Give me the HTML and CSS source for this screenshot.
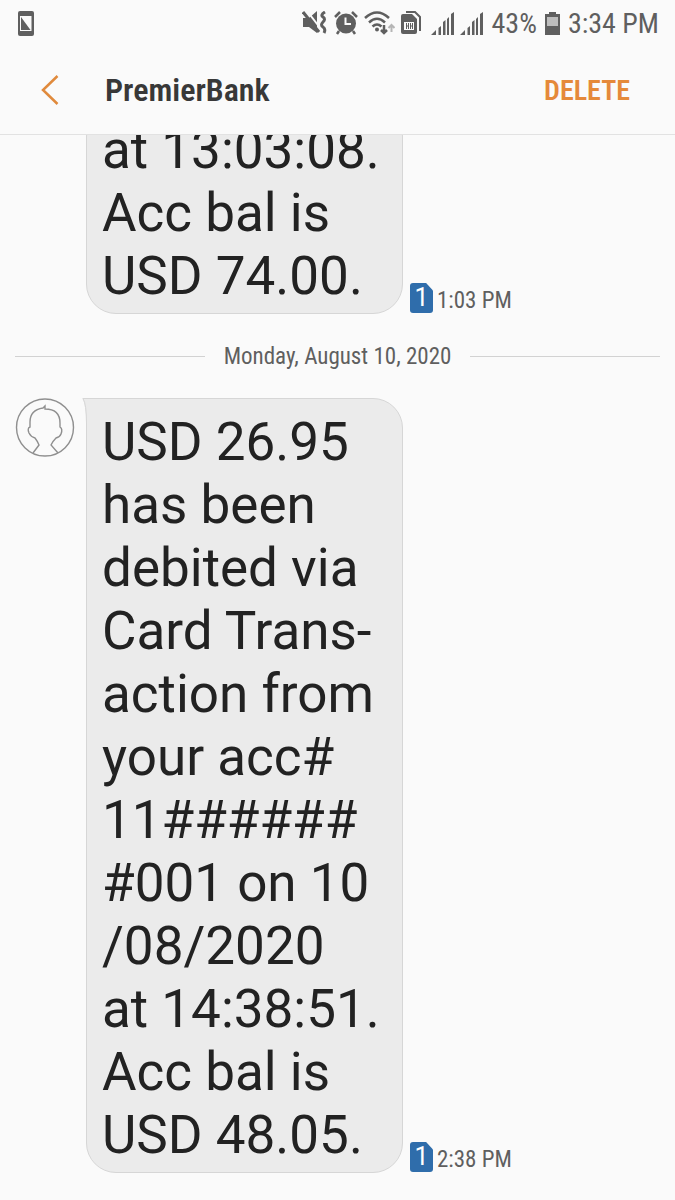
FILE: index.html
```
<!DOCTYPE html>
<html lang="en">
<head>
    <meta charset="utf-8">
    <meta name="viewport" content="width=device-width, initial-scale=1">
    <title>PremierBank</title>
    <link rel="stylesheet" href="styles.css">
</head>
<body>
  <div class="status-bar">
    <svg class="app-icon" width="16" height="25" viewBox="0 0 16 25">
      <rect x="0" y="0" width="16" height="25" rx="2" fill="#5f5f5f"/>
      <path d="M2 5H13.500V20H2Z" fill="#fafafa"/>
      <path d="M3 6L12.500 19H3Z" fill="#5f5f5f"/>
    </svg>
    <div class="status-icons">
      <!-- sound off, vibrate -->
      <svg width="26" height="24" viewBox="0 0 26 24">
        <path d="M1 7H7L15 0V22L7 16H1Z" fill="#5f5f5f"/>
        <path d="M5 0L19 18" stroke="#fafafa" stroke-width="2"/>
        <path d="M1 1L17 21" stroke="#5f5f5f" stroke-width="3"/>
        <path d="M23 1Q18 4 21 6T21 11T21 16T22 22" fill="none" stroke="#5f5f5f" stroke-width="3"/>
      </svg>
      <!-- alarm -->
      <svg width="24" height="24" viewBox="0 0 24 24">
        <circle cx="12" cy="12.500" r="10" fill="#5f5f5f"/>
        <path d="M11.500 6.500V13H17" fill="none" stroke="#fafafa" stroke-width="2"/>
        <path d="M1 6L6 1M18 1L23 6M5 20L3 23M19 20L21 23" stroke="#5f5f5f" stroke-width="2.500"/>
      </svg>
      <!-- wifi -->
      <svg width="31" height="24" viewBox="0 0 31 24">
        <path d="M1 7Q13 -4 25 7M5 11.500Q13 4 21 11.500M8.500 15.500Q13 11.500 17.500 15.500" fill="none" stroke="#5f5f5f" stroke-width="2.500"/>
        <circle cx="13" cy="18.500" r="2" fill="#5f5f5f"/>
        <path d="M20 14V22M17 19L20 22L23 19" fill="none" stroke="#5f5f5f" stroke-width="2.500"/>
        <path d="M27.500 21V14M24.500 17L27.500 14L30.500 17" fill="none" stroke="#b5b5b5" stroke-width="2"/>
      </svg>
      <!-- sim cards -->
      <svg width="21" height="24" viewBox="0 0 21 24">
        <path d="M5 1H14L19 6V20" fill="none" stroke="#5f5f5f" stroke-width="2"/>
        <path d="M2 3H11L16 8V21Q16 23 14 23H2Q0 23 0 21V5Q0 3 2 3Z" fill="#5f5f5f"/>
        <path d="M3 11H13V19H3Z" fill="#fafafa"/>
        <path d="M5.500 12V18M5.500 15H7.500M7.500 12V18M9.500 12V18M9.500 15H12M11.500 12V18" stroke="#5f5f5f"/>
      </svg>
      <!-- signal, sim 1 and sim 2 -->
      <svg class="signal" width="23" height="23" viewBox="0 0 23 23">
        <path d="M0 23L5 18V23ZM7.500 23V16L10 14V23ZM12 23V10L14.500 8V23ZM16 23V7L18 5V23ZM20 23V2L23 0V23Z" fill="#5f5f5f"/>
      </svg>
      <svg class="signal" width="23" height="23" viewBox="0 0 23 23">
        <path d="M0 23L5 18V23ZM7.500 23V16L10 14V23ZM12 23V10L14.500 8V23ZM16 23V7L18 5V23ZM20 23V2L23 0V23Z" fill="#5f5f5f"/>
      </svg>
    </div>
    <span class="battery-level">43%</span>
    <svg class="battery" width="15" height="23" viewBox="0 0 15 23">
      <path d="M0 2H4V0H11V2H15V23H0Z" fill="#5f5f5f"/>
      <rect x="2" y="5" width="11" height="9" fill="#bdbdbd"/>
    </svg>
    <span class="clock">3:34 PM</span>
  </div>

  <header class="title-bar">
    <button class="back-button" aria-label="Back">
      <svg width="18" height="30" viewBox="0 0 18 30">
        <path d="M16.500 1L2 15L16.500 29" fill="none" stroke="#e08a3c" stroke-width="2.500"/>
      </svg>
    </button>
    <h1 class="sender">PremierBank</h1>
    <button class="delete-button">DELETE</button>
  </header>

  <main class="chat">
    <div class="message">
      <div class="avatar-space"></div>
      <p class="bubble">at 13:03:08.<br>Acc bal is<br>USD 74.00.</p>
      <div class="message-info">
        <span class="sim-badge">1</span>
        <time>1:03 PM</time>
      </div>
    </div>

    <div class="date-divider"><span>Monday, August 10, 2020</span></div>

    <div class="message">
      <svg class="avatar" width="60" height="60" viewBox="0 0 60 60">
        <g fill="none" stroke="#8f8f8f" stroke-width="1.400">
          <circle cx="30" cy="29.500" r="28.500"/>
          <path d="M18 55L24 47Q23 44 20 40Q16 39 14 35Q12 30 15 29V24Q15 12 28 10L30 8V11Q45 11 45 25V29Q48 31 46 36Q45 39 41 40Q38 43 36 47L43 55"/>
        </g>
      </svg>
      <p class="bubble bubble-first">
        <svg class="tail" width="7" height="26" viewBox="0 0 7 26">
          <path d="M7 0H0Q4 6 4 26H7Z" fill="#ebebeb"/>
          <path d="M7 0.500H1Q4.500 6 4.500 26" fill="none" stroke="#d6d6d6"/>
        </svg>USD 26.95<br>has been<br>debited via<br>Card Trans-<br>action from<br>your acc#<br>11######<br>#001 on 10<br>/08/2020<br>at 14:38:51.<br>Acc bal is<br>USD 48.05.</p>
      <div class="message-info">
        <span class="sim-badge">1</span>
        <time>2:38 PM</time>
      </div>
    </div>
  </main>
</body>
</html>
```
FILE: styles.css
```
* {
  box-sizing: border-box;
}

body {
  margin: 0;
  height: 100vh;
  display: flex;
  flex-direction: column;
  background-color: #fafafa;
  color: #5f5f5f;
  font-family: "Roboto Condensed", "Liberation Sans Narrow", Roboto, sans-serif;
}

button {
  border: none;
  padding: 0;
  background: none;
  font-family: inherit;
  cursor: pointer;
}

svg {
  display: block;
  flex-shrink: 0;
}

/* Status bar */
.status-bar {
  height: 46px;
  padding: 0 16px 0 18px;
  display: flex;
  align-items: center;
  font-size: 28px;
  flex-shrink: 0;
}

.status-icons {
  margin-left: auto;
  display: flex;
  align-items: center;
  gap: 6px;
}

.status-icons .signal:nth-child(5) {
  margin-left: 3px;
}

.battery-level {
  margin-left: 9px;
}

.battery {
  margin: 0 8px;
}

/* Title bar */
.title-bar {
  height: 89px;
  padding: 0 45px 0 41px;
  display: flex;
  align-items: center;
  border-bottom: 1px solid #e2e2e2;
  flex-shrink: 0;
}

.sender {
  margin: 0 auto 0 46px;
  color: #383838;
  font-size: 32px;
  font-weight: 600;
}

.delete-button {
  color: #e5893a;
  font-size: 28px;
  font-weight: 600;
}

/* Conversation, kept scrolled to the newest message */
.chat {
  flex: 1;
  min-height: 0;
  padding: 0 15px 27px;
  display: flex;
  flex-direction: column;
  justify-content: flex-end;
  overflow: hidden;
}

.message {
  display: flex;
  flex-shrink: 0;
}

.avatar,
.avatar-space {
  width: 60px;
  flex-shrink: 0;
}

.bubble {
  position: relative;
  width: 49%;
  min-width: 317px;
  margin: 0 7px 0 11px;
  padding: 12px 15px 5px;
  background-color: #ebebeb;
  border: 1px solid #d6d6d6;
  border-radius: 30px;
  color: #222;
  font-family: Roboto, sans-serif;
  font-size: 53px;
  line-height: 63px;
  white-space: nowrap;
}

.bubble-first {
  border-top-left-radius: 0;
}

.tail {
  position: absolute;
  top: -1px;
  left: -5px;
}

.message-info {
  align-self: flex-end;
  display: flex;
  align-items: flex-end;
  gap: 4px;
  font-size: 23px;
  line-height: 27px;
}

.sim-badge {
  width: 23px;
  margin-bottom: 1px;
  background-color: #2f6dab;
  border-radius: 3px;
  clip-path: polygon(0 0, 70% 0, 100% 25%, 100% 100%, 0 100%);
  color: #fff;
  font-family: Roboto, sans-serif;
  font-size: 25px;
  line-height: 30px;
  text-align: center;
}

.date-divider {
  height: 84px;
  display: flex;
  align-items: center;
  gap: 19px;
  font-size: 23px;
  line-height: 27px;
  flex-shrink: 0;
}

.date-divider::before,
.date-divider::after {
  content: "";
  flex: 1;
  height: 1px;
  background-color: #d2d2d2;
}
```
